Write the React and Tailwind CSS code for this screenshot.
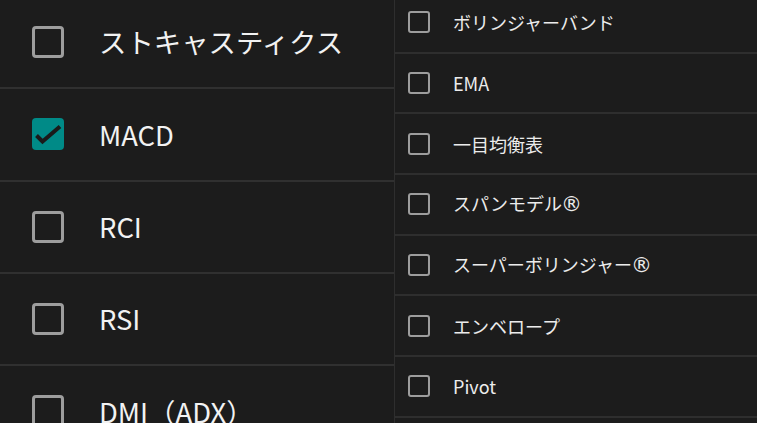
import React from 'react';

const leftItems = [
  { label: 'ストキャスティクス', checked: false },
  { label: 'MACD', checked: true },
  { label: 'RCI', checked: false },
  { label: 'RSI', checked: false },
  { label: 'DMI（ADX）', checked: false },
];

const rightItems = [
  { label: 'ボリンジャーバンド' },
  { label: 'EMA' },
  { label: '一目均衡表' },
  { label: 'スパンモデル', reg: true },
  { label: 'スーパーボリンジャー', reg: true },
  { label: 'エンベロープ' },
  { label: 'Pivot' },
];

const BigBox = ({ checked }) =>
  checked ? (
    <div className="w-8 h-8 rounded-[4px] bg-[#008a87] shrink-0">
      <svg width="32" height="32" viewBox="0 0 32 32">
        <polyline points="4.5,17.5 10.5,23.5 28,8.5" fill="none" stroke="#1a1a1a" strokeWidth="4" />
      </svg>
    </div>
  ) : (
    <div className="w-8 h-8 rounded-[4px] border-[3px] border-[#9d9d9d] shrink-0" />
  );

const SmallBox = () => (
  <div className="w-[22px] h-[22px] rounded-[3px] border-2 border-[#9d9d9d] shrink-0" />
);

export default function App() {
  return (
    <div
      className="w-[757px] h-[423px] overflow-hidden bg-[#1c1c1c] flex text-[#f2f2f2]"
      style={{ fontFamily: '"Noto Sans CJK JP", "Noto Sans", sans-serif' }}
    >
      <div className="w-[395px] border-r border-[#2e2e2e] -mt-[3px]">
        {leftItems.map((it) => (
          <div
            key={it.label}
            className="h-[92.3px] border-b-2 border-[#303030] flex items-center pl-8"
          >
            <BigBox checked={it.checked} />
            <span className="ml-[35px] text-[27.4px] leading-none whitespace-nowrap">{it.label}</span>
          </div>
        ))}
      </div>
      <div className="flex-1 -mt-[7px]">
        {rightItems.map((it) => (
          <div
            key={it.label}
            className="h-[60.7px] border-b-2 border-[#2e2e2e] flex items-center pl-[13px]"
          >
            <SmallBox />
            <span className="ml-[23px] text-[18px] leading-none text-[#ececec] whitespace-nowrap">
              {it.label}
              {it.reg && (
                <span className="-ml-px text-[21px] font-['DejaVu_Sans']">®</span>
              )}
            </span>
          </div>
        ))}
      </div>
    </div>
  );
}
